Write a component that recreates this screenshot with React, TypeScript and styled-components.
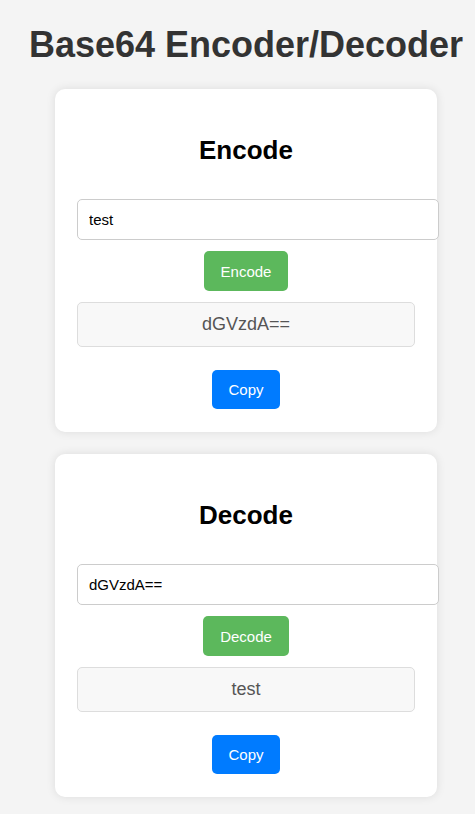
import React, { useState } from "react";
import styled, { createGlobalStyle } from "styled-components";

const GlobalStyle = createGlobalStyle`
  html, body {
    margin: 0;
    padding: 0;
    background: #f4f4f4;
    font-family: "Liberation Sans", Arial, sans-serif;
  }
  * { box-sizing: border-box; }
`;

const Page = styled.div`
  display: flex;
  flex-direction: column;
  align-items: center;
  padding: 0 0 20px 17px;
  width: 475px;
  overflow: hidden;
`;

const Title = styled.h1`
  margin: 24px 0 23px;
  font-size: 36px;
  font-weight: bold;
  color: #333;
  white-space: nowrap;
`;

const Card = styled.section`
  width: 382px;
  background: #fff;
  border-radius: 10px;
  box-shadow: 0 0 10px rgba(0, 0, 0, 0.1);
  padding: 20px 22px 23px;
  margin-bottom: 22px;
  display: flex;
  flex-direction: column;
  align-items: center;
`;

const CardTitle = styled.h2`
  margin: 26px 0 33px;
  font-size: 26px;
  font-weight: bold;
  color: #000;
`;

const TextInput = styled.input`
  align-self: flex-start;
  width: 362px;
  height: 41px;
  padding: 0 11px;
  border: 1px solid #ccc;
  border-radius: 5px;
  font-family: "Liberation Sans", Arial, sans-serif;
  font-size: 15px;
  color: #000;
  background: #fff;
  outline: none;
`;

const Button = styled.button<{ $variant: "green" | "blue" }>`
  margin-top: ${(p) => (p.$variant === "green" ? 11 : 23)}px;
  height: ${(p) => (p.$variant === "green" ? 40 : 39)}px;
  padding: 0 ${(p) => (p.$variant === "green" ? 17 : 16)}px;
  border: none;
  border-radius: 5px;
  background: ${(p) => (p.$variant === "green" ? "#5cb85c" : "#007bff")};
  color: #fff;
  font-family: "Liberation Sans", Arial, sans-serif;
  font-size: 15px;
  cursor: pointer;
`;

const Result = styled.div`
  align-self: stretch;
  margin-top: 11px;
  height: 45px;
  display: flex;
  align-items: center;
  justify-content: center;
  background: #f8f8f8;
  border: 1px solid #ddd;
  border-radius: 5px;
  font-size: 18px;
  color: #555;
`;

type PanelProps = {
  title: string;
  action: string;
  value: string;
  output: string;
};

function Panel({ title, action, value, output }: PanelProps) {
  const [text, setText] = useState(value);
  return (
    <Card>
      <CardTitle>{title}</CardTitle>
      <TextInput value={text} onChange={(e) => setText(e.target.value)} />
      <Button $variant="green">{action}</Button>
      <Result>{output}</Result>
      <Button $variant="blue">Copy</Button>
    </Card>
  );
}

export default function App() {
  return (
    <>
      <GlobalStyle />
      <Page>
        <Title>Base64 Encoder/Decoder</Title>
        <Panel title="Encode" action="Encode" value="test" output="dGVzdA==" />
        <Panel title="Decode" action="Decode" value="dGVzdA==" output="test" />
      </Page>
    </>
  );
}
